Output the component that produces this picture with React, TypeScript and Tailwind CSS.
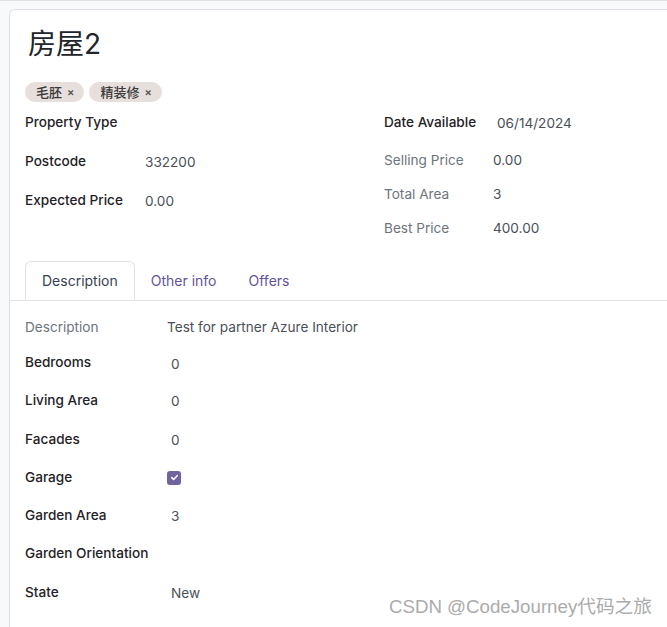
import React from 'react';

const font = { fontFamily: 'Inter, "Noto Sans CJK SC", sans-serif' };

function Tag({ label }: { label: string }) {
  return (
    <span className="flex h-5 items-center gap-[5px] rounded-full bg-[#e6dfdc] pl-[11px] pr-[10px] text-[13px] font-medium text-[#3a3a3a]">
      <span className="leading-5">{label}</span>
      <span className="text-[11px] font-semibold leading-5 text-[#555]">×</span>
    </span>
  );
}

interface RowProps {
  label: string;
  value?: React.ReactNode;
  labelWidth: string;
  height: string;
  muted?: boolean;
  editable?: boolean;
}

function Row({ label, value, labelWidth, height, muted, editable }: RowProps) {
  return (
    <div className={`flex items-center ${height}`}>
      <div
        className={`${labelWidth} shrink-0 leading-5 ${
          muted ? 'font-normal text-[#6c757d]' : 'font-medium text-[#1f2226]'
        }`}
      >
        {label}
      </div>
      {value !== undefined && (
        <div className={`leading-5 text-[#495057] ${editable ? 'pl-1 pt-[3px]' : ''}`}>{value}</div>
      )}
    </div>
  );
}

function Checkbox() {
  return (
    <span className="mt-[1px] flex h-[14px] w-[14px] items-center justify-center rounded-[3px] bg-[#71639e]">
      <svg width="9" height="9" viewBox="0 0 10 10" fill="none">
        <path d="M2 5.2l2 2L8 3" stroke="white" strokeWidth="1.8" strokeLinecap="round" strokeLinejoin="round" />
      </svg>
    </span>
  );
}

export default function App() {
  return (
    <div
      className="h-[627px] w-full overflow-hidden border-t border-[#dee2e6] bg-[#f8f9fa] pl-[9px] pt-[8px] text-[13.6px]"
      style={font}
    >
      <div className="h-[700px] rounded-tl-md border-l border-t border-[#dee2e6] bg-white">
        <div className="pl-[15px] pt-[16px]">
          <h1 className="pl-[3px] text-[28px] font-normal leading-9 text-[#212529]">房屋2</h1>
          <div className="mt-5 flex gap-[5px]">
            <Tag label="毛胚" />
            <Tag label="精装修" />
          </div>
          <div className="grid grid-cols-[359px_1fr]">
            <div>
              <Row label="Property Type" labelWidth="w-[116px]" height="h-[39px]" />
              <Row label="Postcode" value="332200" labelWidth="w-[116px]" height="h-[39px]" editable />
              <Row label="Expected Price" value="0.00" labelWidth="w-[116px]" height="h-[39px]" editable />
            </div>
            <div>
              <div className="mb-[2px]">
                <Row label="Date Available" value="06/14/2024" labelWidth="w-[109px]" height="h-[39px]" editable />
              </div>
              <Row label="Selling Price" value="0.00" labelWidth="w-[109px]" height="h-[34px]" muted />
              <Row label="Total Area" value="3" labelWidth="w-[109px]" height="h-[34px]" muted />
              <Row label="Best Price" value="400.00" labelWidth="w-[109px]" height="h-[34px]" muted />
            </div>
          </div>
        </div>

        <div className="mt-4 flex border-b border-[#dee2e6] pl-[15px] text-sm">
          <div className="-mb-px flex h-[39px] items-center rounded-t-md border border-b-white border-[#dee2e6] px-4 text-[#374151]">
            Description
          </div>
          <div className="flex h-[39px] items-center px-4 text-[#5f5499]">Other info</div>
          <div className="flex h-[39px] items-center px-4 text-[#5f5499]">Offers</div>
        </div>

        <div className="pl-[15px] pt-[9px]">
          <Row label="Description" value="Test for partner Azure Interior" labelWidth="w-[142px]" height="h-[34px]" muted />
          <Row label="Bedrooms" value="0" labelWidth="w-[142px]" height="h-[36px]" editable />
          <Row label="Living Area" value="0" labelWidth="w-[142px]" height="h-[39px]" editable />
          <Row label="Facades" value="0" labelWidth="w-[142px]" height="h-[39px]" editable />
          <Row label="Garage" value={<Checkbox />} labelWidth="w-[142px]" height="h-[38px]" />
          <Row label="Garden Area" value="3" labelWidth="w-[142px]" height="h-[37px]" editable />
          <Row label="Garden Orientation" labelWidth="w-[142px]" height="h-[39px]" />
          <Row label="State" value="New" labelWidth="w-[142px]" height="h-[39px]" editable />
        </div>
      </div>

      <div
        className="absolute bottom-[8px] right-[15px] text-[18.7px] leading-6 text-[#ababab] [text-shadow:0_1px_1px_#fff]"
        style={{ fontFamily: '"Liberation Sans", "Noto Sans CJK SC", sans-serif' }}
      >
        CSDN @CodeJourney代码之旅
      </div>
    </div>
  );
}
